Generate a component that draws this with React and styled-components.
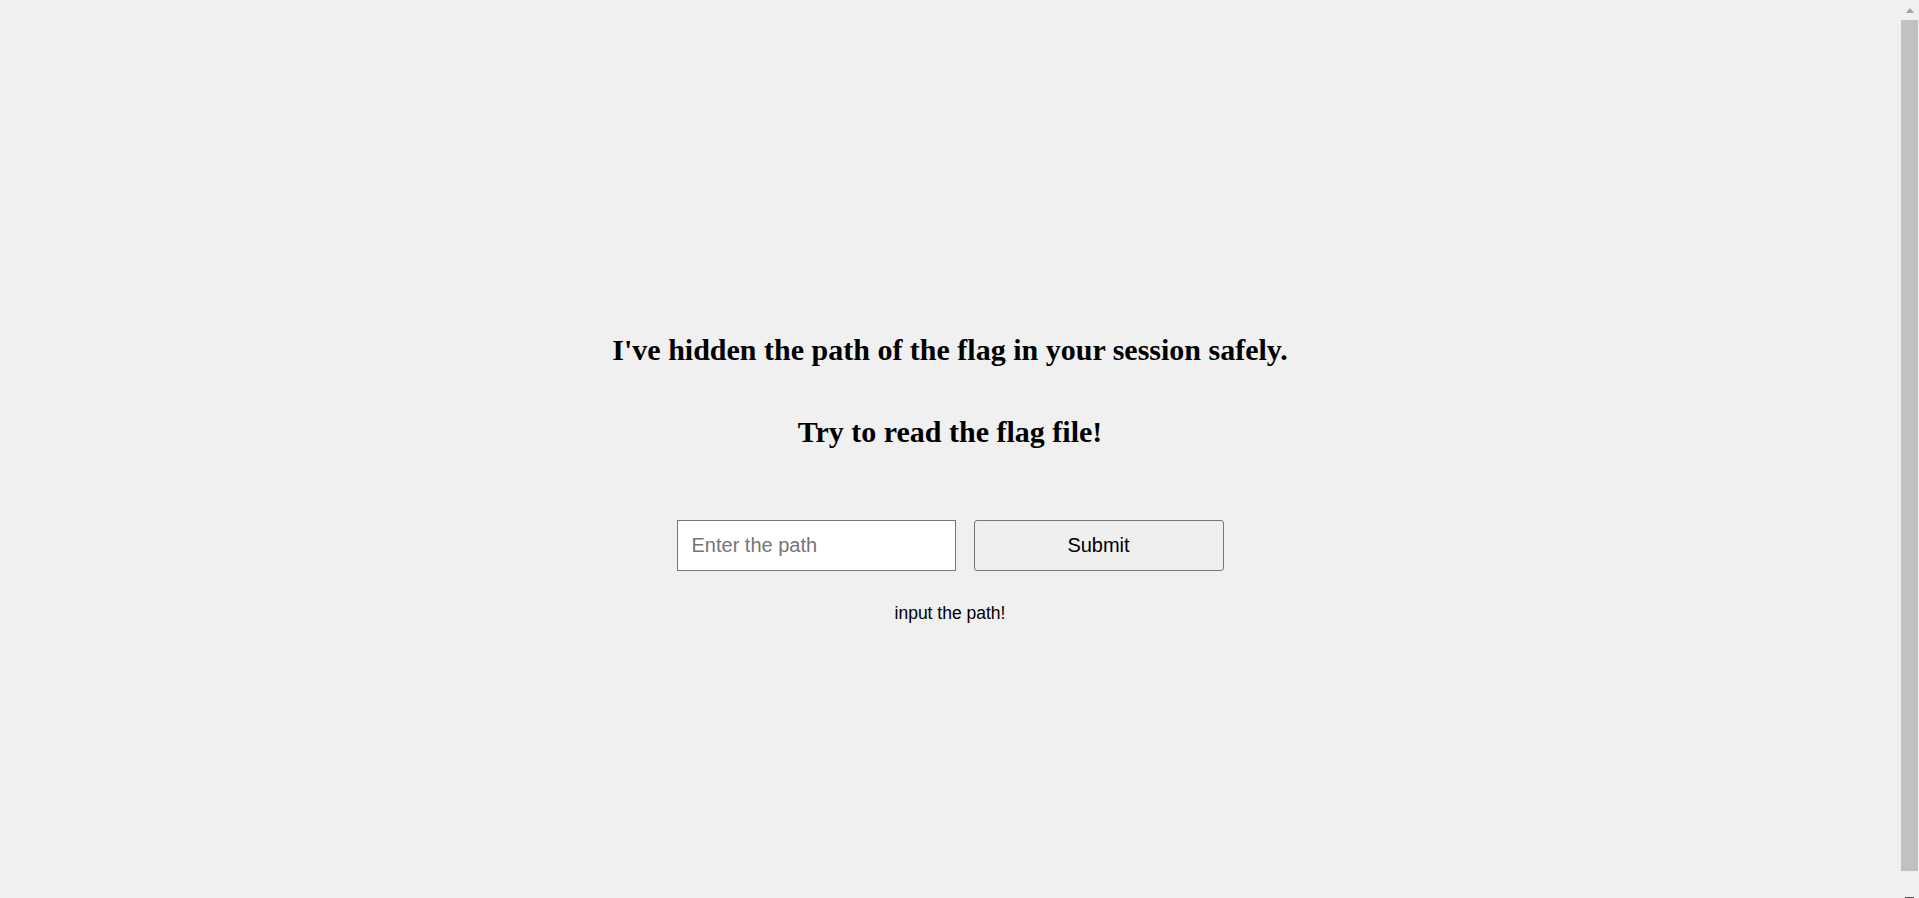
import React from 'react'
import styled, { createGlobalStyle } from 'styled-components'

const GlobalStyle = createGlobalStyle`
  body {
    margin: 8px;
    padding-right: 19px;
    background-color: #f0f0f0;
    font-family: "Liberation Serif", "Times New Roman", serif;
  }
`

const Page = styled.div`
  height: 100vh;
  box-sizing: border-box;
  padding-top: 41px;
  display: flex;
  flex-direction: column;
  align-items: center;
  justify-content: center;
`

const Heading = styled.h2`
  margin: 0;
  margin-top: ${props => props.$gap || 0}px;
  font-family: "Liberation Serif", "Times New Roman", serif;
  font-size: 30px;
  font-weight: bold;
  line-height: 34.5px;
  color: #000;
`

const Form = styled.form`
  display: flex;
  gap: 18px;
  margin-top: 70px;
`

const PathInput = styled.input`
  width: 279px;
  height: 51px;
  box-sizing: border-box;
  padding: 0 14px;
  border: 1px solid #767676;
  border-radius: 0;
  background: #fff;
  font-family: "Liberation Sans", Arial, sans-serif;
  font-size: 20px;
  color: #000;
  outline: none;

  &::placeholder {
    color: #757575;
  }
`

const SubmitButton = styled.button`
  width: 250px;
  height: 51px;
  box-sizing: border-box;
  border: 1px solid #767676;
  border-radius: 3px;
  background: #efefef;
  font-family: "Liberation Sans", Arial, sans-serif;
  font-size: 20px;
  color: #000;
  cursor: pointer;
`

const Message = styled.p`
  margin: 32px 0 0;
  font-family: "Liberation Sans", Arial, sans-serif;
  font-size: 17.5px;
  line-height: 20px;
  color: #000;
`

/* window scrollbar, drawn over the right edge */
const ScrollTrack = styled.div`
  position: fixed;
  top: 0;
  right: 0;
  width: 19px;
  height: 100vh;
  background: #f0f0f0;
  display: flex;
  flex-direction: column;
  align-items: center;
`

const Arrow = styled.div`
  flex: none;
  height: 20px;
  width: 100%;
  display: flex;
  justify-content: center;
  align-items: ${props => (props.$down ? 'flex-end' : 'flex-start')};
  padding-top: ${props => (props.$down ? 0 : 8)}px;
  box-sizing: border-box;
`

const Triangle = styled.div`
  width: 0;
  height: 0;
  border-left: 4.5px solid transparent;
  border-right: 4.5px solid transparent;
  border-bottom: 5px solid #a3a3a3;
`

const DownMark = styled.div`
  width: 9px;
  height: 1px;
  background: #505050;
`

const Thumb = styled.div`
  flex: 1;
  width: 17px;
  margin: 0 0 7px 1px;
  align-self: flex-start;
  background: #c1c1c1;
`

const App = () => {
  return (
    <>
      <GlobalStyle />
      <Page>
        <Heading>I've hidden the path of the flag in your session safely.</Heading>
        <Heading $gap={48}>Try to read the flag file!</Heading>
        <Form onSubmit={e => e.preventDefault()}>
          <PathInput type="text" placeholder="Enter the path" />
          <SubmitButton type="submit">Submit</SubmitButton>
        </Form>
        <Message>input the path!</Message>
      </Page>
      <ScrollTrack>
        <Arrow>
          <Triangle />
        </Arrow>
        <Thumb />
        <Arrow $down>
          <DownMark />
        </Arrow>
      </ScrollTrack>
    </>
  )
}

export default App
